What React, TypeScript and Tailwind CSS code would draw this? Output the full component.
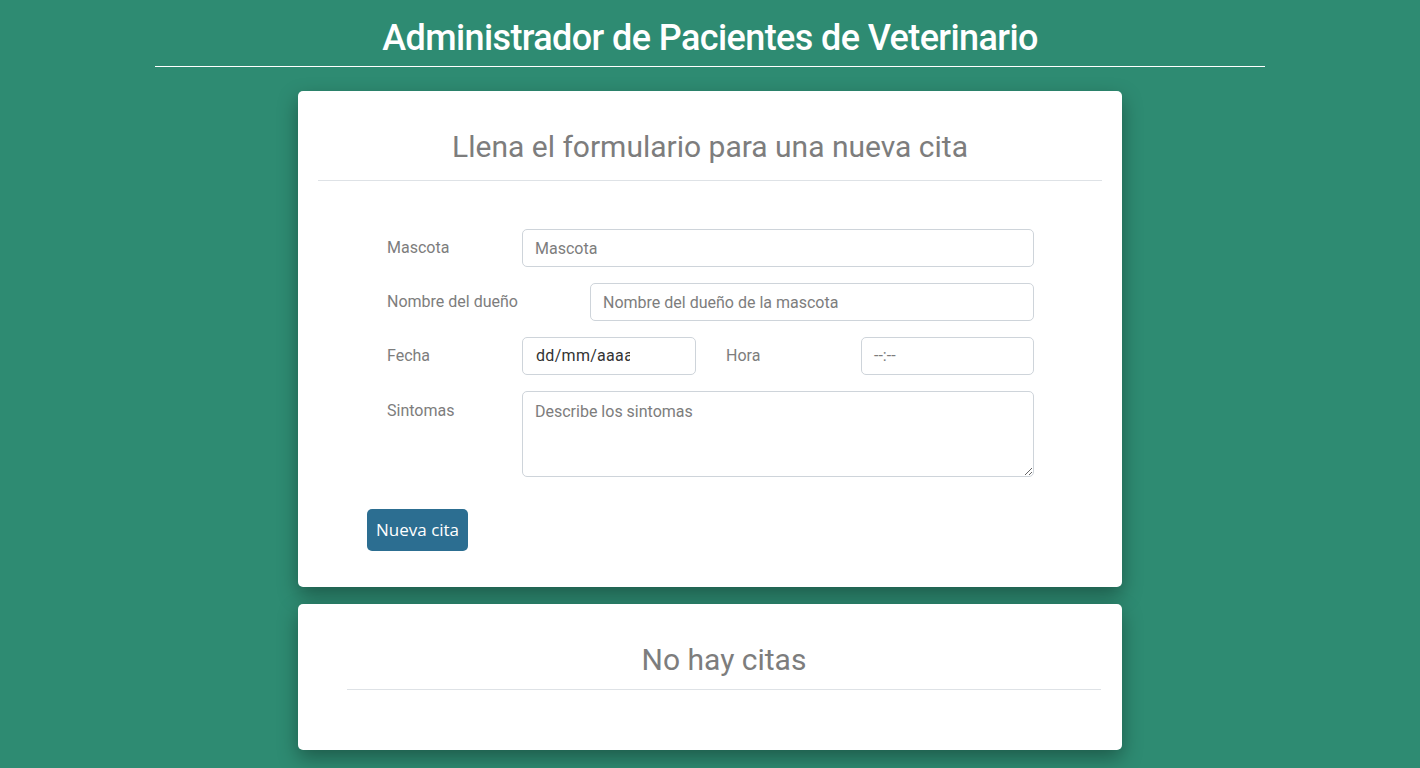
export default function App() {
  return (
    <div className="min-h-screen bg-[#2e8b72] font-['Roboto',sans-serif] pb-10">
      <header className="mx-auto w-[1110px] pt-[14px]">
        <h1 className="text-center text-[36px] font-medium leading-[48px] tracking-[-0.6px] text-white">
          Administrador de Pacientes de Veterinario
        </h1>
        <div className="mt-[4px] h-px bg-white" />
      </header>

      <main className="mx-auto mt-[24px] flex w-[824px] flex-col gap-[17px]">
        {/* Formulario */}
        <section className="rounded-[5px] bg-white px-5 pt-[36px] pb-[36px] shadow-[0_8px_20px_rgba(0,0,0,0.35)]">
          <h2 className="text-center text-[30px] leading-[40px] text-[#7d7d7d]">
            Llena el formulario para una nueva cita
          </h2>
          <div className="mt-[13px] h-px bg-[#dee2e6]" />

          <form className="mt-[48px] pl-[49px] pr-[68px]">
            <div className="flex flex-col gap-4 pl-5">
              <div className="flex items-center">
                <label className="w-[135px] text-base text-[#7d7d7d]">Mascota</label>
                <input
                  placeholder="Mascota"
                  className="h-[38px] flex-1 rounded-[5px] border border-[#ced4da] px-3 text-base text-[#495057] outline-none placeholder:text-[#7d7d7d]"
                />
              </div>
              <div className="flex items-center">
                <label className="w-[203px] text-base text-[#7d7d7d]">Nombre del dueño</label>
                <input
                  placeholder="Nombre del dueño de la mascota"
                  className="h-[38px] flex-1 rounded-[5px] border border-[#ced4da] px-3 text-base text-[#495057] outline-none placeholder:text-[#7d7d7d]"
                />
              </div>
              <div className="flex items-center">
                <label className="w-[135px] text-base text-[#7d7d7d]">Fecha</label>
                <div className="flex h-[38px] w-[174px] items-center overflow-hidden rounded-[5px] border border-[#ced4da] pl-[13px]">
                  <span className="whitespace-nowrap text-base tracking-[0.3px] text-[#333]">dd/mm/aaa</span>
                  <span className="w-[6px] overflow-hidden text-base text-[#333]">a</span>
                </div>
                <label className="ml-[30px] w-[135px] text-base text-[#7d7d7d]">Hora</label>
                <div className="flex h-[38px] flex-1 items-center rounded-[5px] border border-[#ced4da] pl-[12px]">
                  <span className="text-base text-[#7d7d7d]">--:--</span>
                </div>
              </div>
              <div className="flex items-start">
                <label className="w-[135px] pt-[8px] text-base text-[#7d7d7d]">Sintomas</label>
                <textarea
                  placeholder="Describe los sintomas"
                  className="h-[86px] flex-1 rounded-[5px] border border-[#ced4da] px-3 py-[8px] text-base text-[#495057] outline-none placeholder:text-[#7d7d7d]"
                />
              </div>
            </div>

            <button
              type="button"
              className="mt-[32px] h-[42px] rounded-[5px] bg-[#2c6e91] px-[9px] font-['Open_Sans',sans-serif] text-[17px] text-white"
            >
              Nueva cita
            </button>
          </form>
        </section>

        {/* Listado */}
        <section className="rounded-[5px] bg-white pt-[36px] pb-[60px] pl-[49px] pr-[21px] shadow-[0_8px_20px_rgba(0,0,0,0.35)]">
          <h2 className="text-center text-[30px] leading-[40px] text-[#7d7d7d]">No hay citas</h2>
          <div className="mt-[9px] h-px bg-[#dee2e6]" />
        </section>
      </main>
    </div>
  );
}
